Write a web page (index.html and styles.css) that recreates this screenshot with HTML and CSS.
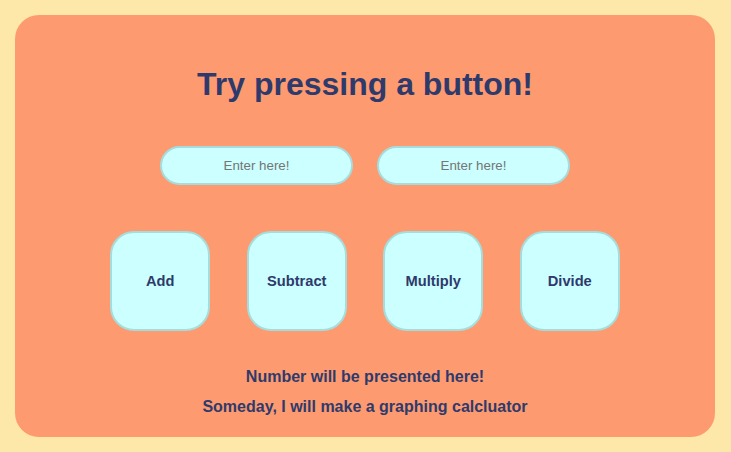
FILE: index.html
```html
<!DOCTYPE html>
<html>
<head>
<meta charset="utf-8">
<link rel="stylesheet" href="styles.css">
</head>
<body>
<div class="card">
  <h1 class="title">Try pressing a button!</h1>
  <div class="inputs">
    <input class="field" type="text" placeholder="Enter here!">
    <input class="field" type="text" placeholder="Enter here!">
  </div>
  <div class="buttons">
    <button class="op">Add</button>
    <button class="op">Subtract</button>
    <button class="op">Multiply</button>
    <button class="op">Divide</button>
  </div>
  <p class="result">Number will be presented here!</p>
  <p class="note">Someday, I will make a graphing calcluator</p>
</div>
</body>
</html>
```
FILE: styles.css
```css
html, body {
  margin: 0;
  padding: 0;
  background: #fee8a9;
  font-family: "Liberation Sans", Arial, sans-serif;
}
body {
  padding: 15px 16px 15px 15px;
}
.card {
  background: #fe9a6f;
  border-radius: 24px;
  padding: 51px 0 21px;
  display: flex;
  flex-direction: column;
  align-items: center;
  color: #2e3a6b;
}
.title {
  margin: 0;
  font-size: 32px;
  line-height: 37px;
  font-weight: bold;
}
.inputs {
  display: flex;
  gap: 24px;
  margin-top: 43px;
}
.field {
  box-sizing: border-box;
  width: 193px;
  height: 39px;
  border: 2px solid #a6dcdc;
  border-radius: 20px;
  background: #ccffff;
  text-align: center;
  font-family: "Liberation Sans", Arial, sans-serif;
  font-size: 13.333px;
  color: #333;
  outline: none;
}
.field::placeholder {
  color: #757575;
}
.buttons {
  display: flex;
  gap: 36.5px;
  margin-top: 46px;
}
.op {
  box-sizing: border-box;
  width: 100px;
  height: 100px;
  border: 2px solid #a6dcdc;
  border-radius: 24px;
  background: #ccffff;
  color: #2e3a6b;
  font-family: "Liberation Sans", Arial, sans-serif;
  font-size: 14.667px;
  font-weight: bold;
  padding: 0;
}
.result, .note {
  margin: 0;
  font-size: 16px;
  line-height: 18px;
  font-weight: bold;
}
.result {
  margin-top: 37px;
}
.note {
  margin-top: 12px;
}
```
